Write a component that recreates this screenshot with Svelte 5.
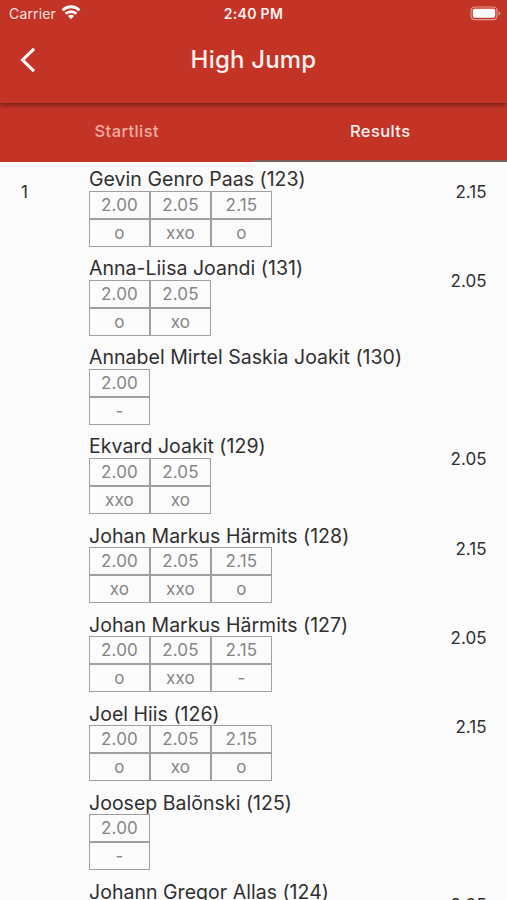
<script lang="ts">
  type Attempt = [height: string, marks: string];
  type Result = { place?: string; name: string; bib: number; best?: string; attempts: Attempt[] };

  const tabs = ['Startlist', 'Results'];
  let activeTab = $state('Results');

  const results: Result[] = [
    { place: '1', name: 'Gevin Genro Paas', bib: 123, best: '2.15', attempts: [['2.00', 'o'], ['2.05', 'xxo'], ['2.15', 'o']] },
    { name: 'Anna-Liisa Joandi', bib: 131, best: '2.05', attempts: [['2.00', 'o'], ['2.05', 'xo']] },
    { name: 'Annabel Mirtel Saskia Joakit', bib: 130, attempts: [['2.00', '-']] },
    { name: 'Ekvard Joakit', bib: 129, best: '2.05', attempts: [['2.00', 'xxo'], ['2.05', 'xo']] },
    { name: 'Johan Markus Härmits', bib: 128, best: '2.15', attempts: [['2.00', 'xo'], ['2.05', 'xxo'], ['2.15', 'o']] },
    { name: 'Johan Markus Härmits', bib: 127, best: '2.05', attempts: [['2.00', 'o'], ['2.05', 'xxo'], ['2.15', '-']] },
    { name: 'Joel Hiis', bib: 126, best: '2.15', attempts: [['2.00', 'o'], ['2.05', 'xo'], ['2.15', 'o']] },
    { name: 'Joosep Balõnski', bib: 125, attempts: [['2.00', '-']] },
    { name: 'Johann Gregor Allas', bib: 124, best: '2.05', attempts: [['2.00', 'o'], ['2.05', 'o']] }
  ];
</script>

<div class="screen">
  <header class="app-bar">
    <div class="status-bar">
      <div class="carrier">
        <span>Carrier</span>
        <svg width="20" height="15" viewBox="0 0 20 15" fill="none" stroke="#fff" stroke-width="2.9">
          <path d="M1.6 5.2a12 12 0 0 1 16.8 0" />
          <path d="M4.6 8.8a7.7 7.7 0 0 1 10.8 0" />
          <path d="M7 11.1a4.2 4.2 0 0 1 6 0L10 14.2z" fill="#fff" stroke="none" />
        </svg>
      </div>
      <span class="clock">2:40 PM</span>
      <svg class="battery" width="32" height="15" viewBox="0 0 32 15">
        <rect x="1" y="1" width="26" height="12.6" rx="3.6" fill="none" stroke="#fff" stroke-opacity="0.5" stroke-width="1.2" />
        <rect x="2.8" y="2.8" width="22.4" height="9" rx="1.8" fill="#fff" />
        <path d="M28.6 5.2c2.4.8 2.4 3.4 0 4.2z" fill="#fff" fill-opacity="0.5" />
      </svg>
    </div>
    <div class="toolbar">
      <button class="back" aria-label="Back">
        <svg width="16" height="26" viewBox="0 0 16 26" fill="none" stroke="#fff" stroke-width="3.1">
          <path d="M14 1.9L2.6 13L14 24.1" />
        </svg>
      </button>
      <h1>High Jump</h1>
    </div>
  </header>

  <nav class="tabs">
    {#each tabs as tab}
      <button class="tab" class:active={tab === activeTab} onclick={() => (activeTab = tab)}>{tab}</button>
    {/each}
  </nav>

  <main class="results">
    {#each results as result}
      <div class="row">
        <span class="place">{result.place ?? ''}</span>
        <div class="athlete">
          <div class="name">{result.name} ({result.bib})</div>
          <div class="attempts">
            {#each result.attempts as [height, marks]}
              <div class="attempt">
                <div class="cell">{height}</div>
                <div class="cell">{marks}</div>
              </div>
            {/each}
          </div>
        </div>
        <span class="best">{result.best ?? ''}</span>
      </div>
    {/each}
  </main>
</div>

<style>
  :global(body) {
    background: #fbfbfb;
  }

  .screen {
    display: flex;
    flex-direction: column;
    height: 900px;
    overflow: hidden;
    background: #fbfbfb;
    color: #2f2f2f;
    font-family: Inter, 'Liberation Sans', sans-serif;
  }

  button {
    padding: 0;
    border: 0;
    background: none;
    font: inherit;
    cursor: pointer;
  }

  .app-bar {
    position: relative;
    flex: none;
    height: 103px;
    background: #c43426;
    color: #fff;
    box-shadow: 0 2px 5px rgba(0, 0, 0, 0.45);
  }

  .status-bar {
    display: grid;
    grid-template-columns: 1fr auto 1fr;
    align-items: center;
    height: 27px;
    padding: 0 6px 0 9px;
  }

  .carrier {
    display: flex;
    align-items: center;
    gap: 5px;
    font-size: 14px;
    letter-spacing: 0.15px;
    color: #ffe4e0;
  }

  .carrier svg {
    margin-top: -2px;
  }

  .clock {
    margin-right: 3px;
    font-size: 14px;
    font-weight: 600;
    letter-spacing: 0.3px;
    color: #fff1ee;
  }

  .battery {
    justify-self: end;
    margin-right: -1px;
  }

  .toolbar {
    display: grid;
    grid-template-columns: 60px 1fr 60px;
    align-items: center;
    height: 65px;
  }

  .back {
    display: flex;
    padding-left: 20px;
  }

  h1 {
    margin: 0;
    font-size: 24px;
    font-weight: 500;
    letter-spacing: 0.2px;
    text-align: center;
    color: #fff1ee;
  }

  .tabs {
    display: grid;
    grid-template-columns: 1fr 1fr;
    flex: none;
    height: 59px;
    background: #c43426;
  }

  .tab {
    padding-bottom: 2px;
    border-bottom: 2px solid transparent;
    color: #f1aca3;
    font-size: 16.5px;
    font-weight: 500;
    letter-spacing: 0.4px;
  }

  .tab.active {
    border-bottom-color: #756060;
    color: #fff1ee;
  }

  .row {
    display: grid;
    grid-template-columns: 68px 1fr auto;
    height: 89.15px;
    padding: 0 20.5px 0 21px;
  }

  .place,
  .best {
    padding-top: 19px;
    font-size: 17px;
    line-height: 22px;
  }

  .name {
    height: 28.5px;
    font-size: 19.5px;
    line-height: 34px;
    letter-spacing: 0.03px;
    white-space: nowrap;
  }

  .attempts {
    display: flex;
  }

  .attempt {
    width: 61px;
  }

  .cell {
    box-sizing: border-box;
    height: 28px;
    border: 1px solid #a0a0a0;
    color: #858585;
    font-size: 17px;
    line-height: 26px;
    letter-spacing: 0.2px;
    text-align: center;
  }
</style>
